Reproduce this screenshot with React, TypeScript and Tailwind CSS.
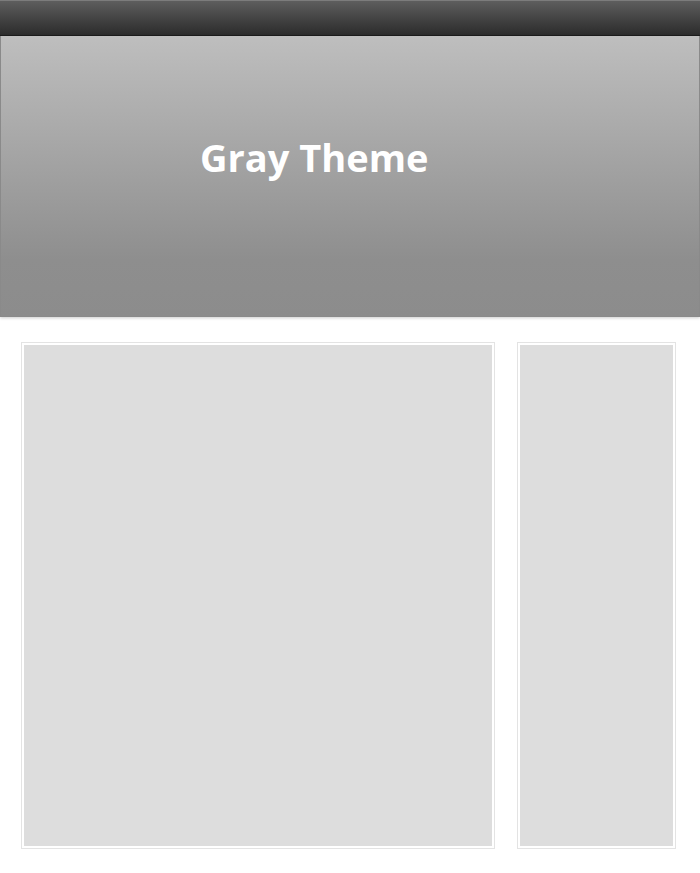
export default function App() {
  return (
    <div className="min-h-[873px] bg-white" style={{ fontFamily: '"Open Sans", "Noto Sans", sans-serif' }}>
      <div className="h-[36px] border-t border-t-[#7c7c7c] border-b border-b-[#1c1c1c] bg-gradient-to-b from-[#5e5e5e] to-[#2c2c2c]" />
      <div className="h-[281px] border border-t-0 border-[#8a8a8a] bg-[linear-gradient(to_bottom,#bebebe_0%,#8e8e8e_80%,#8c8c8c_100%)] shadow-[0_1px_3px_rgba(0,0,0,0.2)] pl-[199px] pt-[95px]">
        <h1 className="text-[38px] leading-[52px] font-bold text-white">Gray Theme</h1>
      </div>
      <div className="flex gap-[22px] pl-[21px] pt-[25px]">
        <div className="w-[474px] h-[507px] border border-[#e3e3e3] p-[2px]">
          <div className="h-full bg-[#dddddd]" />
        </div>
        <div className="w-[159px] h-[507px] border border-[#e3e3e3] p-[2px]">
          <div className="h-full bg-[#dddddd]" />
        </div>
      </div>
    </div>
  );
}
